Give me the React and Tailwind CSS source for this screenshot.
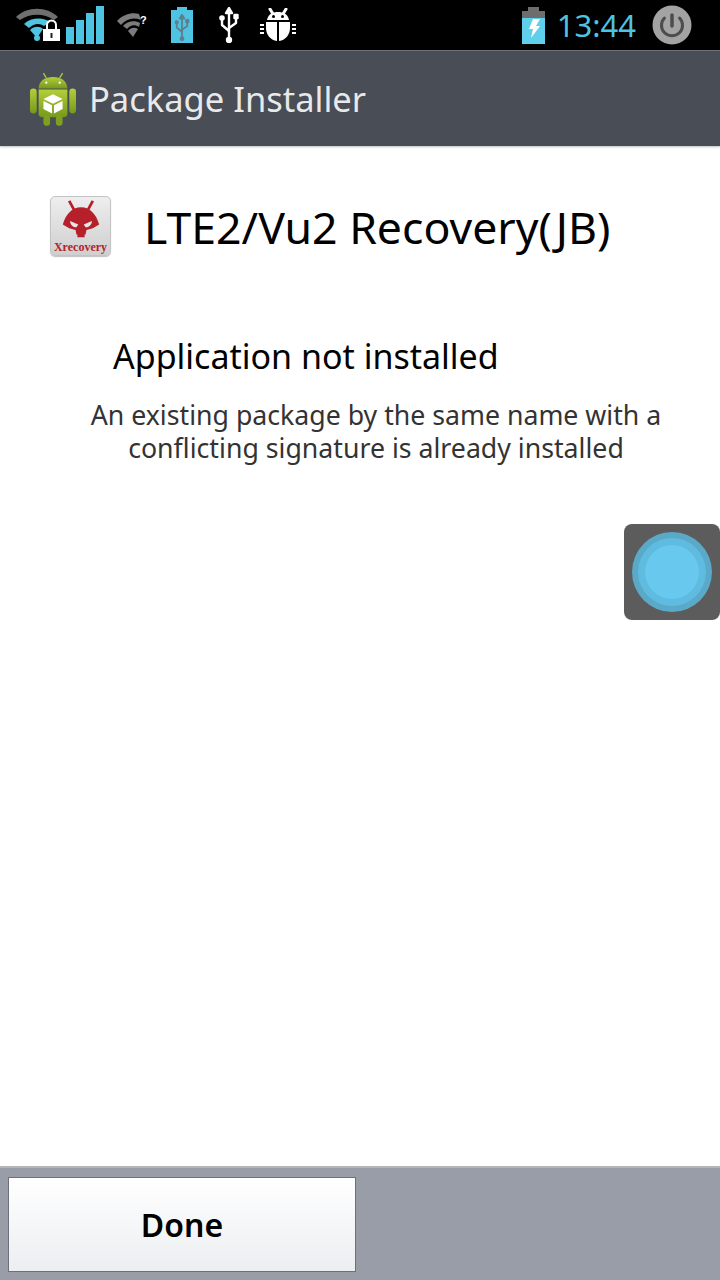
import React from "react";

const BLUE = "#4fc3e2";

const WifiLock = () => (
  <svg width="44" height="34" viewBox="0 0 44 34" className="ml-4">
    <path d="M0 9 C11 -2 31 -2 42 9 L38 12 C28 5 14 5 4 12 Z" fill="#6f6f6f" />
    <path d="M8 16 C15 9 28 9 34 14 L28 18 C24 15 18 15 13 20 Z" fill={BLUE} />
    <path d="M14 22 C18 18 24 18 27 21 L21 30 Z" fill={BLUE} />
    <circle cx="21" cy="30" r="3" fill={BLUE} />
    <rect x="27" y="21" width="17" height="12" fill="#fff" />
    <path d="M31 21 V17 a4.5 4.5 0 0 1 9 0 V21" fill="none" stroke="#fff" strokeWidth="2" />
    <rect x="34.5" y="25" width="2" height="5" fill="#222" />
  </svg>
);

const Signal = () => (
  <svg width="38" height="38" viewBox="0 0 38 38" className="ml-1.5">
    <rect x="0" y="21" width="8" height="17" fill={BLUE} />
    <rect x="10" y="14" width="8" height="24" fill={BLUE} />
    <rect x="20" y="7" width="8" height="31" fill={BLUE} />
    <rect x="30" y="0" width="8" height="38" fill={BLUE} />
  </svg>
);

const WifiQuestion = () => (
  <svg width="30" height="26" viewBox="0 0 30 26" className="ml-[13px]">
    <path d="M0 9 C6 2 16 0 22 2 L24 8 C16 5 9 7 4 13 Z" fill="#7c7c7c" />
    <path d="M6 14 C10 9 18 8 23 11 L22 15 C18 12 13 13 10 17 Z" fill="#7c7c7c" />
    <path d="M11 19 C14 15 18 15 21 17 L16 25 Z" fill="#7c7c7c" />
    <text x="23" y="12" fontSize="11" fontWeight="700" fill="#fff" fontFamily="Liberation Sans, sans-serif">?</text>
  </svg>
);

const UsbGlyph = ({ color = "#fff" }) => (
  <g fill="none" stroke={color} strokeWidth="2.4" strokeLinecap="round" strokeLinejoin="round">
    <path d="M10 4 V32" />
    <path d="M3 12 V18 L10 24" />
    <path d="M17 11 V16 L10 21" />
    <path d="M10 1 L7 6 H13 Z" fill={color} />
    <circle cx="3" cy="11" r="1.6" fill={color} />
    <rect x="15.5" y="8" width="3" height="3" fill={color} />
    <circle cx="10" cy="33" r="2" fill={color} />
  </g>
);

const UsbBattery = () => (
  <svg width="22" height="36" viewBox="0 0 22 36" className="ml-6">
    <rect x="6" y="0" width="10" height="3" fill={BLUE} />
    <rect x="0" y="3" width="22" height="33" fill={BLUE} />
    <g transform="translate(3.5 7) scale(0.75)">
      <UsbGlyph color="#5f7f8c" />
    </g>
  </svg>
);

const Usb = () => (
  <svg width="20" height="36" viewBox="0 0 20 36" className="ml-[26px]">
    <UsbGlyph />
  </svg>
);

const Bug = () => (
  <svg width="36" height="34" viewBox="0 0 36 34" className="ml-[21px]">
    <path d="M10 1 L13 6 M26 1 L23 6" stroke="#fff" strokeWidth="3" strokeLinecap="round" />
    <path d="M7 12 C8 6 13 4 18 4 C23 4 28 6 29 12 Z" fill="#fff" />
    <circle cx="13.5" cy="8.5" r="1.5" fill="#000" />
    <circle cx="22.5" cy="8.5" r="1.5" fill="#000" />
    <path d="M6 14 H17 V33 C10 32 6 26 6 20 Z" fill="#fff" />
    <path d="M30 14 H19 V33 C26 32 30 26 30 20 Z" fill="#fff" />
    <path d="M0 16 H4 V18 H0 Z M0 20 H4 V22 H0 Z M0 24 H4 V26 H0 Z M32 16 H36 V18 H32 Z M32 20 H36 V22 H32 Z M32 24 H36 V26 H32 Z" fill="#fff" />
  </svg>
);

const ChargeBattery = () => (
  <svg width="23" height="37" viewBox="0 0 23 37">
    <rect x="6" y="0" width="11" height="4" fill="#6d6d6d" />
    <rect x="0" y="4" width="23" height="7" fill="#6d6d6d" />
    <rect x="0" y="11" width="23" height="26" fill="#5fd0ec" />
    <path d="M11 12 H18 L14 19 H18 L9 31 L11 22 H7 Z" fill="#fff" />
  </svg>
);

const PowerButton = () => (
  <svg width="40" height="40" viewBox="0 0 40 40" className="ml-[16px]">
    <circle cx="20" cy="20" r="19.5" fill="#a3a3a3" />
    <path d="M12.5 13 A10.5 10.5 0 1 0 27.5 13" fill="none" stroke="#4c4c4c" strokeWidth="3" strokeLinecap="round" />
    <path d="M20 10 V21" stroke="#4c4c4c" strokeWidth="3.5" strokeLinecap="round" />
  </svg>
);

const AndroidBox = () => (
  <svg width="46" height="54" viewBox="0 0 48 56">
    <defs>
      <linearGradient id="droid" x1="0" y1="0" x2="0" y2="1">
        <stop offset="0" stopColor="#b4cf3c" />
        <stop offset="1" stopColor="#76991c" />
      </linearGradient>
    </defs>
    <path d="M14 1 L17 6 M34 1 L31 6" stroke="#a9c43a" strokeWidth="1.5" />
    <path d="M9 17 C9 9 16 5 24 5 C32 5 39 9 39 17 Z" fill="url(#droid)" />
    <circle cx="17" cy="11" r="1.2" fill="#fff" />
    <circle cx="31" cy="11" r="1.2" fill="#fff" />
    <path d="M9 18 H39 V43 a4 4 0 0 1 -4 4 H13 a4 4 0 0 1 -4 -4 Z" fill="url(#droid)" />
    <rect x="0" y="17" width="7" height="26" rx="3.5" fill="url(#droid)" />
    <rect x="41" y="17" width="7" height="26" rx="3.5" fill="url(#droid)" />
    <rect x="14" y="45" width="7" height="11" rx="3.5" fill="#7f9f20" />
    <rect x="27" y="45" width="7" height="11" rx="3.5" fill="#7f9f20" />
    <path d="M24 23 L34 28 L24 33 L14 28 Z" fill="#fff" />
    <path d="M14 30 L23 34.5 V43 L14 38.5 Z" fill="#fff" />
    <path d="M34 30 L25 34.5 V43 L34 38.5 Z" fill="#fff" />
  </svg>
);

const XrecoveryIcon = () => (
  <div className="flex h-[60px] w-[61px] flex-col items-center rounded-[5px] border border-[#c4c4c4] bg-gradient-to-b from-[#eeeeee] to-[#cfcfcf] shadow-[0_1px_1px_rgba(0,0,0,0.25)]">
    <svg width="44" height="40" viewBox="0 0 44 44" className="mt-[3px]">
      <path d="M9 1 L15 12 M35 1 L29 12" stroke="#b5202b" strokeWidth="3" />
      <path d="M22 8 C32 8 39 16 42 27 L35 31 L28 33 L27 38 H17 L16 33 L9 31 L2 27 C5 16 12 8 22 8 Z" fill="#b5202b" />
      <path d="M10 23 L19 27 L17 30 C13 30 10 27 10 23 Z M34 23 L25 27 L27 30 C31 30 34 27 34 23 Z" fill="#e6e6e6" />
      <path d="M18 35 H26 V41 H18 Z" fill="#b5202b" />
    </svg>
    <span className="mt-[1px] font-['Liberation_Serif',serif] text-[12px] leading-[12px] font-bold text-[#b5202b]">Xrecovery</span>
  </div>
);

export default function App() {
  return (
    <div className="relative flex h-[1280px] w-[720px] flex-col overflow-hidden bg-white font-['Noto_Sans',sans-serif]">
      {/* Status bar */}
      <div className="flex h-[50px] items-center bg-black">
        <WifiLock />
        <Signal />
        <WifiQuestion />
        <UsbBattery />
        <Usb />
        <Bug />
        <div className="ml-auto flex items-center pr-[28px]">
          <ChargeBattery />
          <span className="ml-3 text-[31px] leading-none text-[#4fc3e2]">13:44</span>
          <PowerButton />
        </div>
      </div>

      {/* Action bar */}
      <div className="flex h-[96px] items-center border-t border-[#6d7076] bg-[#494d55] pl-[30px] shadow-[0_1px_2px_rgba(0,0,0,0.25)]">
        <AndroidBox />
        <span className="ml-[13px] pt-0.5 text-[34.5px] leading-none text-[#e8e9ea]">Package Installer</span>
      </div>

      {/* Body */}
      <div className="flex flex-1 flex-col">
        <div className="mt-[50px] flex items-center pl-[50px]">
          <XrecoveryIcon />
          <span className="ml-[33px] pt-0.5 text-[44.6px] leading-none text-black">LTE2/Vu2 Recovery(JB)</span>
        </div>
        <div className="mt-[77px] pl-[113px] text-[34px] leading-[46px] text-black">Application not installed</div>
        <div className="mt-[19px] pl-[32px] text-center text-[26.7px] leading-[33px] text-[#333333]">
          An existing package by the same name with a
          <br />
          conflicting signature is already installed
        </div>
      </div>

      {/* Button bar */}
      <div className="flex h-[114px] items-start border-t-2 border-[#b3b5b8] bg-[#999da8] pt-[9px] pl-2">
        <button className="flex h-[95px] w-[348px] items-center justify-center border border-[#6d7079] bg-gradient-to-b from-white to-[#eceef1] text-[32px] font-semibold text-black">
          Done
        </button>
      </div>

      {/* Floating touch button */}
      <div className="absolute top-[524px] left-[624px] flex h-[96px] w-[96px] items-center justify-center rounded-[8px] bg-[#5c5c5c]">
        <div className="flex h-[80px] w-[80px] items-center justify-center rounded-full bg-[#5aa9c8]">
          <div className="flex h-[68px] w-[68px] items-center justify-center rounded-full bg-[#5fbbdf]">
            <div className="h-[54px] w-[54px] rounded-full bg-[#68c8ee]" />
          </div>
        </div>
      </div>
    </div>
  );
}
